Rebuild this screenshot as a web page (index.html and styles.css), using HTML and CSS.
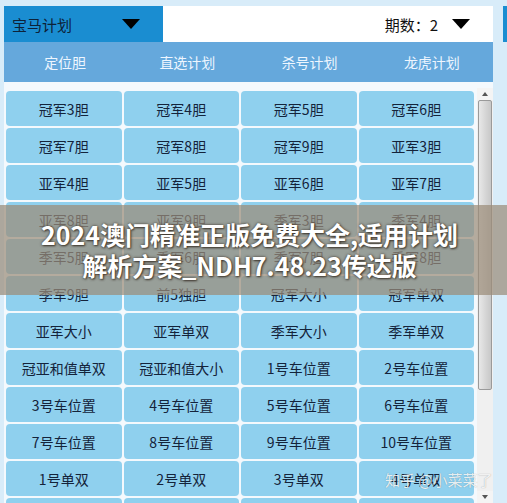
FILE: index.html
```html
<!DOCTYPE html>
<html lang="zh-CN">
<head>
<meta charset="utf-8">
<link rel="stylesheet" href="styles.css">
</head>
<body>
<div class="page">
  <div class="app">
    <div class="topbar">
      <div class="brand"><span class="brand-text">宝马计划</span><span class="tri"></span></div>
      <div class="period"><span>期数：2</span><span class="tri"></span></div>
    </div>
    <div class="tabs">
      <div class="tab">定位胆</div>
      <div class="tab">直选计划</div>
      <div class="tab">杀号计划</div>
      <div class="tab">龙虎计划</div>
    </div>
    <div class="content">
      <div class="grid">
        <div class="cell">冠军3胆</div><div class="cell">冠军4胆</div><div class="cell">冠军5胆</div><div class="cell">冠军6胆</div>
        <div class="cell">冠军7胆</div><div class="cell">冠军8胆</div><div class="cell">冠军9胆</div><div class="cell">亚军3胆</div>
        <div class="cell">亚军4胆</div><div class="cell">亚军5胆</div><div class="cell">亚军6胆</div><div class="cell">亚军7胆</div>
        <div class="cell">亚军8胆</div><div class="cell">亚军9胆</div><div class="cell">季军3胆</div><div class="cell">季军4胆</div>
        <div class="cell">季军5胆</div><div class="cell">季军6胆</div><div class="cell">季军7胆</div><div class="cell">季军8胆</div>
        <div class="cell">季军9胆</div><div class="cell">前5独胆</div><div class="cell">冠军大小</div><div class="cell">冠军单双</div>
        <div class="cell">亚军大小</div><div class="cell">亚军单双</div><div class="cell">季军大小</div><div class="cell">季军单双</div>
        <div class="cell">冠亚和值单双</div><div class="cell">冠亚和值大小</div><div class="cell">1号车位置</div><div class="cell">2号车位置</div>
        <div class="cell">3号车位置</div><div class="cell">4号车位置</div><div class="cell">5号车位置</div><div class="cell">6号车位置</div>
        <div class="cell">7号车位置</div><div class="cell">8号车位置</div><div class="cell">9号车位置</div><div class="cell">10号车位置</div>
        <div class="cell">1号单双</div><div class="cell">2号单双</div><div class="cell">3号单双</div><div class="cell">4号单双</div>
        <div class="cell"></div><div class="cell"></div><div class="cell"></div><div class="cell"></div>
      </div>
      <div class="scrollbar">
        <div class="sb-btn"><span class="up"></span></div>
        <div class="sb-track"><div class="sb-thumb"></div></div>
        <div class="sb-btn"><span class="down"></span></div>
      </div>
    </div>
  </div>
  <div class="side"><div class="side-blue"></div></div>
  <div class="banner">
    <div class="banner-text">2024澳门精准正版免费大全,适用计划<br>解析方案_NDH7.48.23传达版</div>
  </div>
  <div class="watermark">知乎 @小菜菜了</div>
</div>
</body>
</html>
```
FILE: styles.css
```css
html, body {
  margin: 0;
  padding: 0;
}
body {
  background: #d8ecf9;
  font-family: "Noto Sans CJK SC", "Noto Sans", sans-serif;
  overflow: hidden;
  width: 507px;
  height: 503px;
}
.page {
  position: relative;
  width: 507px;
  height: 503px;
  overflow: hidden;
  display: flex;
  padding-top: 6px;
  box-sizing: border-box;
}
.app {
  margin-left: 4px;
  width: 489px;
  display: flex;
  flex-direction: column;
}
.topbar {
  height: 36px;
  display: flex;
  background: #ffffff;
}
.brand {
  width: 159px;
  background: #1a8dd1;
  display: flex;
  align-items: center;
  padding-left: 8px;
  box-sizing: border-box;
}
.brand-text {
  font-size: 15px;
  color: #0d2238;
  width: 110px;
}
.tri {
  width: 0;
  height: 0;
  border-left: 9px solid transparent;
  border-right: 9px solid transparent;
  border-top: 10px solid #000;
}
.period {
  flex: 1;
  display: flex;
  align-items: center;
  justify-content: flex-end;
  padding-right: 23px;
  gap: 14px;
  font-size: 15px;
  color: #111;
}
.tabs {
  height: 40px;
  background: #65a8dc;
  display: grid;
  grid-template-columns: repeat(4, 1fr);
}
.tab {
  display: flex;
  align-items: center;
  justify-content: center;
  color: #eef6ff;
  font-size: 14px;
}
.content {
  flex: 1;
  display: flex;
  background: #f4f9fd;
  overflow: hidden;
  padding-top: 6px;
  padding-left: 2px;
}
.grid {
  width: 470px;
  display: grid;
  grid-template-columns: repeat(4, 115.5px);
  grid-auto-rows: 35px;
  gap: 2px;
  padding-top: 3px;
  align-content: start;
}
.cell {
  background: #8fd0ee;
  border-radius: 4px;
  display: flex;
  align-items: center;
  justify-content: center;
  font-size: 14px;
  color: #14233a;
}
.scrollbar {
  width: 16px;
  margin-left: 2px;
  display: flex;
  flex-direction: column;
  background: #f0f0f0;
}
.sb-btn {
  height: 12px;
  display: flex;
  align-items: center;
  justify-content: center;
  background: #f4f4f4;
}
.up {
  width: 0; height: 0;
  border-left: 3px solid transparent;
  border-right: 3px solid transparent;
  border-bottom: 4px solid #555;
}
.down {
  width: 0; height: 0;
  border-left: 3px solid transparent;
  border-right: 3px solid transparent;
  border-top: 4px solid #555;
}
.sb-track {
  flex: 1;
  padding: 0 1px;
}
.sb-thumb {
  height: 288px;
  border: 1px solid #9a9a9a;
  border-radius: 2px;
  background: linear-gradient(to right, #e8e8e8, #d4d4d4 60%, #c8c8c8);
}
.side {
  width: 14px;
  padding-left: 10px;
}
.side-blue {
  width: 4px;
  height: 36px;
  background: #1a8dd1;
}
.banner {
  position: absolute;
  left: 0;
  right: 0;
  top: 205px;
  height: 90px;
  background: rgba(155, 140, 120, 0.72);
  display: flex;
  align-items: center;
  justify-content: center;
}
.banner-text {
  color: #ffffff;
  font-weight: 700;
  font-size: 25px;
  line-height: 31px;
  text-align: center;
  text-shadow: 0 0 3px rgba(50, 40, 30, 0.85), 1px 1px 2px rgba(50, 40, 30, 0.75);
  padding-right: 8px;
}
.watermark {
  position: absolute;
  left: 385px;
  top: 469px;
  font-size: 15px;
  color: rgba(255, 255, 255, 0.85);
  text-shadow: 0 0 1px rgba(0, 0, 0, 0.35);
}
```
